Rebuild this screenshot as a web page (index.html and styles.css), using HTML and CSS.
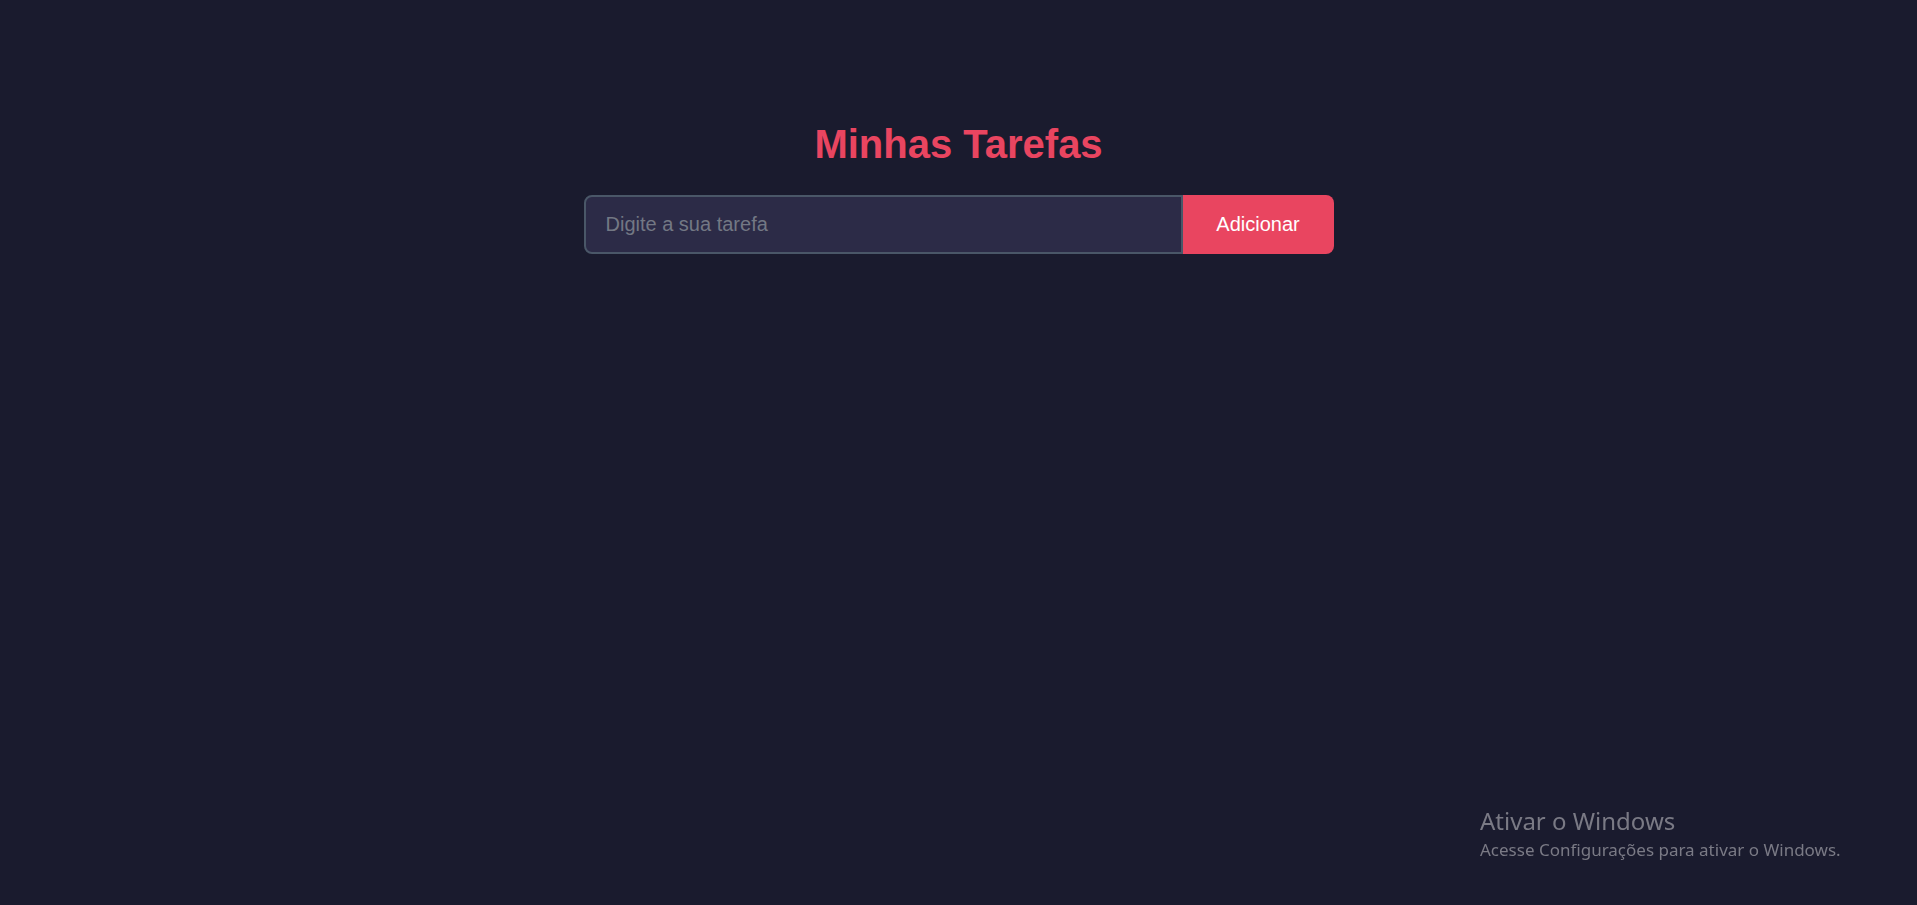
FILE: index.html
```html
<!DOCTYPE html>
<html lang="pt-BR">
<head>
<meta charset="UTF-8">
<title>Minhas Tarefas</title>
<link rel="stylesheet" href="styles.css">
</head>
<body>
<main class="app">
  <h1 class="title">Minhas Tarefas</h1>
  <form class="task-form">
    <input class="task-input" type="text" placeholder="Digite a sua tarefa">
    <button class="task-btn" type="button">Adicionar</button>
  </form>
  <ul class="task-list"></ul>
</main>
<div class="watermark">
  <div class="wm-title">Ativar o Windows</div>
  <div class="wm-sub">Acesse Configurações para ativar o Windows.</div>
</div>
</body>
</html>
```
FILE: styles.css
```css
html, body {
  margin: 0;
  padding: 0;
  height: 100%;
}
body {
  background: #1a1b2e;
  font-family: "Liberation Sans", Arial, sans-serif;
  overflow: hidden;
}
.app {
  width: 750px;
  margin: 0 auto;
  padding-top: 122px;
  display: flex;
  flex-direction: column;
  align-items: stretch;
}
.title {
  margin: 0 0 28px;
  text-align: center;
  color: #e94560;
  font-size: 40px;
  line-height: 45px;
  font-weight: 700;
}
.task-form {
  display: flex;
  margin: 0;
}
.task-input {
  flex: 1;
  min-width: 0;
  height: 59px;
  box-sizing: border-box;
  padding: 16px 20px;
  font-family: "Liberation Sans", Arial, sans-serif;
  font-size: 20px;
  color: #e0e0e0;
  background: #2c2b47;
  border: 2px solid #4a5768;
  border-radius: 8px 0 0 8px;
  outline: none;
}
.task-input::placeholder {
  color: #737884;
}
.task-btn {
  width: 151px;
  height: 59px;
  border: none;
  background: #e94560;
  color: #ffffff;
  font-family: "Liberation Sans", Arial, sans-serif;
  font-size: 20px;
  border-radius: 0 8px 8px 0;
  cursor: pointer;
}
.task-list {
  list-style: none;
  margin: 20px 0 0;
  padding: 0;
}
.watermark {
  position: fixed;
  left: 1480px;
  top: 805px;
  color: #7a7a85;
  font-family: "Noto Sans", "Open Sans", sans-serif;
}
.wm-title {
  font-size: 24px;
  line-height: 32px;
}
.wm-sub {
  font-size: 17px;
  line-height: 26px;
}
```
